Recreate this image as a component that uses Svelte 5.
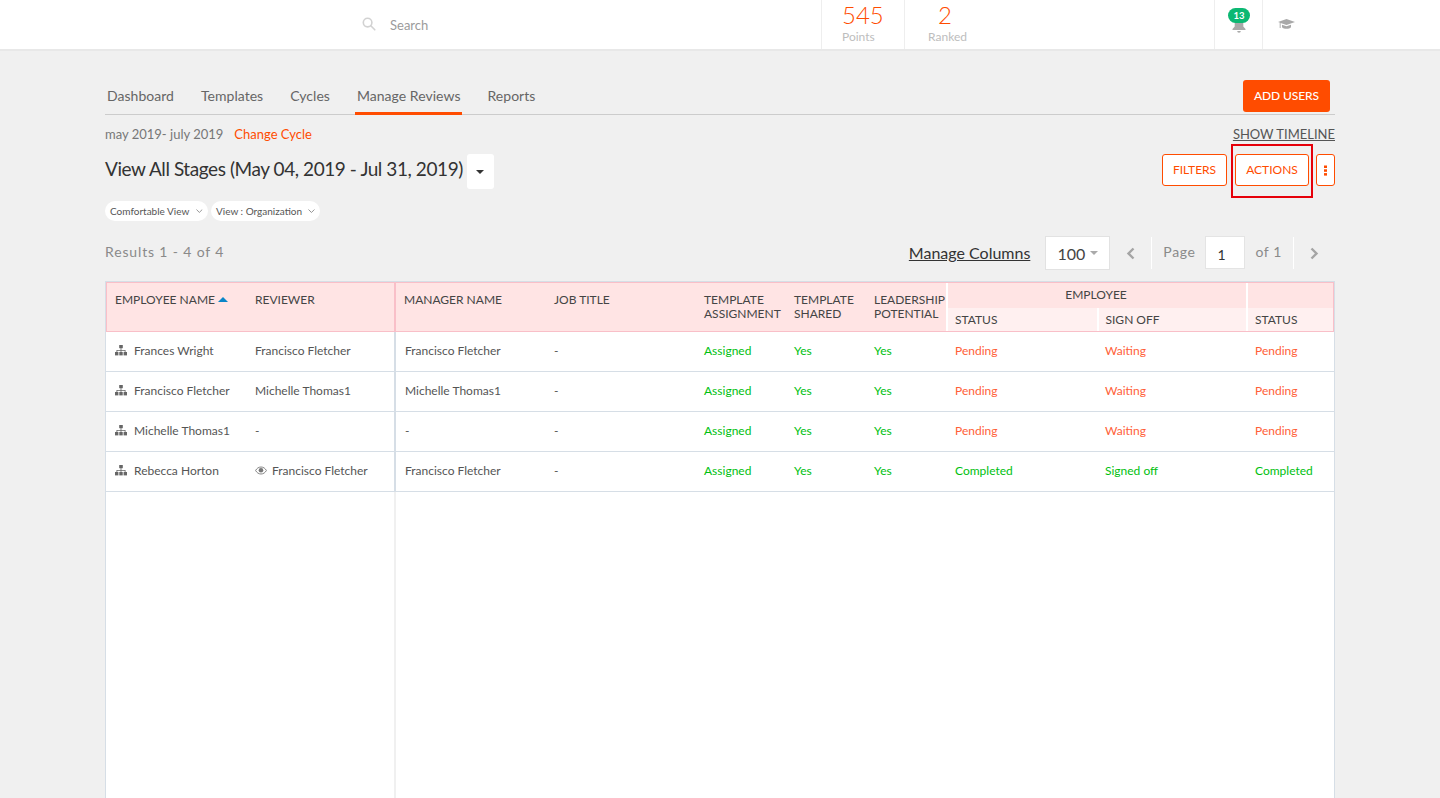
<script>
  const rows = [
    { name: 'Frances Wright', reviewer: 'Francisco Fletcher', eye: false, manager: 'Francisco Fletcher', s1: 'Pending', s2: 'Waiting', s3: 'Pending', done: false },
    { name: 'Francisco Fletcher', reviewer: 'Michelle Thomas1', eye: false, manager: 'Michelle Thomas1', s1: 'Pending', s2: 'Waiting', s3: 'Pending', done: false },
    { name: 'Michelle Thomas1', reviewer: '-', eye: false, manager: '-', s1: 'Pending', s2: 'Waiting', s3: 'Pending', done: false },
    { name: 'Rebecca Horton', reviewer: 'Francisco Fletcher', eye: true, manager: 'Francisco Fletcher', s1: 'Completed', s2: 'Signed off', s3: 'Completed', done: true }
  ];
</script>

<div class="page">
  <header class="topbar">
    <div class="search">
      <svg width="14" height="14" viewBox="0 0 14 14" fill="none" stroke="#d2d2d2" stroke-width="1.6"><circle cx="5.6" cy="5.6" r="4.3"/><path d="M8.8 8.8l4 4" stroke-linecap="round"/></svg>
      <span>Search</span>
    </div>
    <div class="stat first"><b>545</b><small>Points</small></div>
    <div class="stat second"><b>2</b><small>Ranked</small></div>
    <div class="spacer"></div>
    <div class="iconcell bellcell">
      <svg class="bell" width="14" height="15" viewBox="0 0 14 15" fill="#a9a9a9"><path d="M7 0c3 0 4.300 2.200 4.300 5v3.500L13.500 11v1H.5v-1l2.200-2.500V5C2.700 2.200 4 0 7 0z"/><path d="M5.200 13h3.600a1.800 1.800 0 0 1-3.600 0z"/></svg>
      <span class="badge">13</span>
    </div>
    <div class="iconcell hatcell">
      <svg width="17" height="13" viewBox="0 0 17 13" fill="#a9a9a9"><path d="M8.500 1L17 4 8.500 7 2.600 4.900V10H1.700V4.600L0 4z"/><path d="M4 6.700l4.500 1.600L13 6.700v2.600c-1 1-2.700 1.500-4.500 1.500S5 10.300 4 9.300z"/></svg>
    </div>
  </header>

  <main class="content">
    <div class="tabbar">
      <nav class="tabs">
        <span class="tab">Dashboard</span>
        <span class="tab">Templates</span>
        <span class="tab">Cycles</span>
        <span class="tab active">Manage Reviews</span>
        <span class="tab">Reports</span>
      </nav>
      <button class="add">ADD USERS</button>
    </div>

    <div class="cycle-row">
      <span class="cycle">may 2019- july 2019</span>
      <span class="change">Change Cycle</span>
      <span class="timeline">SHOW TIMELINE</span>
    </div>

    <div class="title-row">
      <h1>View All Stages (May 04, 2019 - Jul 31, 2019)</h1>
      <span class="caretbox"><i class="caret"></i></span>
      <div class="actions">
        <button class="outline filters">FILTERS</button>
        <span class="actions-wrap">
          <button class="outline act">ACTIONS</button>
          <span class="mark"></span>
        </span>
        <button class="outline dots" aria-label="More"><svg width="3" height="11" viewBox="0 0 3 11" fill="#ff4c00"><rect x="0" y="0.500" width="3" height="2.500"/><rect x="0" y="4.300" width="3" height="2.500"/><rect x="0" y="8.100" width="3" height="2.500"/></svg></button>
      </div>
    </div>

    <div class="pills">
      <span class="pill">Comfortable View <svg width="7" height="4" viewBox="0 0 7 4" fill="none" stroke="#777" stroke-width=".8"><path d="M.5.500l3 3 3-3"/></svg></span>
      <span class="pill two">View : Organization <svg width="7" height="4" viewBox="0 0 7 4" fill="none" stroke="#777" stroke-width=".8"><path d="M.5.500l3 3 3-3"/></svg></span>
    </div>

    <div class="pager-row">
      <span class="results">Results 1 - 4 of 4</span>
      <span class="manage">Manage Columns</span>
      <span class="size">100 <i class="caret small"></i></span>
      <span class="chev left"><svg width="9" height="13" viewBox="0 0 9 13" fill="none" stroke="#a5a5a5" stroke-width="2.400"><path d="M7.500 1.500l-5 5 5 5"/></svg></span>
      <span class="pg">Page</span>
      <span class="pginput">1</span>
      <span class="pg of">of 1</span>
      <span class="chev right"><svg width="9" height="13" viewBox="0 0 9 13" fill="none" stroke="#a5a5a5" stroke-width="2.400"><path d="M1.500 1.500l5 5-5 5"/></svg></span>
    </div>

    <section class="table">
      <div class="thead">
        <div class="th c1 fixed">EMPLOYEE NAME <i class="sort"></i></div>
        <div class="th c2 fixed">REVIEWER</div>
        <div class="th c3 sep">MANAGER NAME</div>
        <div class="th c4">JOB TITLE</div>
        <div class="th c5">TEMPLATE<br />ASSIGNMENT</div>
        <div class="th c6">TEMPLATE<br />SHARED</div>
        <div class="th c7">LEADERSHIP<br />POTENTIAL</div>
        <div class="group c89">
          <div class="gtitle">EMPLOYEE</div>
          <div class="gsubs"><span class="c8">STATUS</span><span class="c9">SIGN OFF</span></div>
        </div>
        <div class="group c10">
          <div class="gtitle"></div>
          <div class="gsubs"><span>STATUS</span></div>
        </div>
      </div>

      {#each rows as r}
        <div class="tr">
          <div class="td c1 fixed">
            <svg class="org" width="12" height="11" viewBox="0 0 12 11" fill="#666"><rect x="4.200" y="0" width="3.600" height="3.200"/><path d="M5.600 3h.8v2H10.500v2h-.8V5.800H6.400V7h-.8V5.800H2.300V7h-.8V5h4.100z"/><rect x="0" y="7" width="3.400" height="3.400"/><rect x="4.300" y="7" width="3.400" height="3.400"/><rect x="8.600" y="7" width="3.400" height="3.400"/></svg>
            {r.name}
          </div>
          <div class="td c2 fixed">
            {#if r.eye}
              <svg class="eye" width="12" height="9" viewBox="0 0 12 9"><path d="M.6 4.500C1.800 2.300 3.700 1 6 1s4.200 1.300 5.400 3.500C10.200 6.700 8.300 8 6 8S1.800 6.700.6 4.500z" fill="none" stroke="#777" stroke-width=".9"/><circle cx="6" cy="4.300" r="2.300" fill="#777"/></svg>
            {/if}
            {r.reviewer}
          </div>
          <div class="td c3 sep">{r.manager}</div>
          <div class="td c4">-</div>
          <div class="td c5 ok">Assigned</div>
          <div class="td c6 ok">Yes</div>
          <div class="td c7 ok">Yes</div>
          <div class="td c8" class:ok={r.done} class:warn={!r.done}>{r.s1}</div>
          <div class="td c9" class:ok={r.done} class:warn={!r.done}>{r.s2}</div>
          <div class="td c10" class:ok={r.done} class:warn={!r.done}>{r.s3}</div>
        </div>
      {/each}

      <div class="filler"><div class="leftpane"></div></div>
    </section>
  </main>
</div>

<style>
  :global(html), :global(body) { margin: 0; overflow: hidden; background: #f0f0f0; }
  .page { height: 798px; overflow: hidden; background: #f0f0f0; font-family: Lato, "Open Sans", sans-serif; color: #555; box-sizing: border-box; }
  button { font-family: inherit; cursor: pointer; }

  .topbar { display: flex; height: 51px; background: #fff; border-bottom: 2px solid #e8e8e8; box-sizing: border-box; }
  .search { width: 459px; margin-left: 362px; display: flex; align-items: center; gap: 14px; color: #9b9b9b; font-size: 13px; box-sizing: border-box; }
  .search svg { margin-top: -1px; }
  .stat { display: flex; flex-direction: column; border-left: 1px solid #eee; height: 49px; box-sizing: border-box; }
  .stat.first { width: 83px; padding-left: 20px; }
  .stat.second { width: 86px; align-items: center; }
  .stat.second b { margin-left: -5px; }
  .stat b { font-weight: 300; font-size: 24px; line-height: 30px; color: #ff4c00; }
  .stat small { font-size: 12px; line-height: 14px; color: #bdbdbd; }
  .spacer { flex: 1; }
  .iconcell { width: 48px; height: 49px; border-left: 1px solid #eee; position: relative; display: flex; align-items: center; justify-content: center; box-sizing: border-box; }
  .hatcell { margin-right: 130px; }
  .bell { margin-top: 1px; }
  .badge { position: absolute; left: 13px; top: 8px; width: 22px; height: 15px; border-radius: 8px; background: #0cb873; color: #fff; font-size: 9.500px; font-weight: 700; line-height: 15px; text-align: center; }

  .content { width: 1230px; margin-left: 105px; }

  .tabbar { display: flex; justify-content: space-between; height: 64px; box-sizing: border-box; padding-top: 29px; border-bottom: 1px solid #ccc; }
  .tabs { display: flex; align-self: flex-end; gap: 23px; }
  .tab { font-size: 14px; letter-spacing: .03px; line-height: 17px; color: #666; padding: 0 2px 8px; margin-bottom: -1px; border-bottom: 3px solid transparent; }
  .tab.active { border-bottom-color: #ff4c00; }
  .add { width: 87px; height: 32px; margin-right: 5px; background: #ff4c00; color: #fff; font-size: 12px; font-weight: 500; letter-spacing: -.1px; border: 0; border-radius: 3px; padding: 0 0 1px; }

  .cycle-row { display: flex; align-items: center; height: 20px; margin-top: 9px; font-size: 13px; }
  .cycle { color: #777; }
  .change { color: #ff4c00; margin-left: 11px; }
  .timeline { margin-left: auto; color: #555; text-decoration: underline; font-size: 13px; }

  .title-row { display: flex; align-items: flex-start; height: 35px; margin-top: 10px; }
  h1 { margin: 0; font-size: 19px; letter-spacing: -.43px; font-weight: 400; color: #333; line-height: 30px; }
  .caretbox { width: 27px; height: 35px; margin-left: 4px; background: #fff; border-radius: 3px; display: flex; align-items: center; justify-content: center; }
  .caret { display: block; width: 0; height: 0; border-left: 4px solid transparent; border-right: 4px solid transparent; border-top: 4px solid #333; }
  .caret.small { display: inline-block; border-top-color: #aaa; margin: 0 0 0 2px; }
  .actions { margin-left: auto; display: flex; gap: 8px; }
  .outline { height: 32px; background: #fff; color: #ff4c00; border: 1px solid #ff4c00; border-radius: 3px; font-size: 12px; padding: 0 0 2px; display: block; }
  .filters { width: 65px; }
  .act { width: 74px; }
  .dots { width: 19px; margin-left: -1px; padding: 0; display: flex; align-items: center; justify-content: center; }
  .actions-wrap { position: relative; display: block; }
  .mark { position: absolute; left: -4px; right: -4px; top: -10px; bottom: -12px; border: 2px solid #e6000a; box-sizing: border-box; pointer-events: none; }

  .pills { display: flex; gap: 3px; margin-top: 12px; }
  .pill { height: 20px; background: #fff; border-radius: 10px; font-size: 10px; color: #555; display: flex; align-items: center; gap: 7px; padding: 0 5px; box-sizing: border-box; width: 103px; white-space: nowrap; }
  .pill.two { width: 109px; gap: 6px; }

  .pager-row { display: flex; align-items: center; height: 34px; margin-top: 15px; }
  .results { font-size: 14px; color: #8a8a8a; letter-spacing: .85px; margin: -3px auto 0 0; }
  .manage { font-size: 16px; color: #333; text-decoration: underline; margin: -1px 15px 0 0; }
  .size { width: 65px; height: 34px; background: #fff; border: 1px solid #e2e2e2; font-size: 16px; color: #444; display: flex; align-items: center; justify-content: center; box-sizing: border-box; gap: 3px; }
  .chev { width: 42px; height: 32px; display: flex; align-items: center; justify-content: center; box-sizing: border-box; }
  .chev.left { border-right: 1px solid #fff; }
  .chev.right { border-left: 1px solid #fff; margin-left: 11px; }
  .pg { font-size: 14px; color: #8a8a8a; letter-spacing: .6px; margin-top: -3px; }
  .pg:not(.of) { margin-left: 11px; }
  .pginput { align-self: flex-start; width: 40px; height: 33px; background: #fff; border: 1px solid #e4e4e4; box-sizing: border-box; margin: 0 10px; font-size: 14px; color: #333; padding-left: 11px; line-height: 35px; }

  .table { margin-top: 11px; background: #fff; border: 1px solid #d6dee6; border-bottom: 0; min-height: 560px; box-sizing: border-box; font-size: 12px; color: #555; }
  .thead { display: grid; grid-template-columns: 140px 147px 151px 150px 90px 80px 81px 300px 1fr; height: 50px; background: #ffe4e4; border: 1px solid #f9bfc8; box-sizing: border-box; color: #444; }
  .th { padding: 10px 0 0 9px; line-height: 14px; box-sizing: border-box; font-size: 12px; white-space: nowrap; }
  .th.fixed { padding-left: 8px; }
  .th.sep { border-left: 2px solid #f9bfc8; padding-left: 8px; }
  .sort { display: inline-block; width: 0; height: 0; border-left: 5px solid transparent; border-right: 5px solid transparent; border-bottom: 5px solid #0a86c8; margin: 0 0 2px 0; }
  .group { display: flex; flex-direction: column; border-left: 2px solid #fff; }
  .gtitle { height: 25px; line-height: 23px; text-align: center; padding-right: 2px; }
  .gsubs { flex: 1; display: flex; background: #fff0f0; line-height: 23px; padding-left: 7px; }
  .c89 .gsubs span { width: 150px; box-sizing: border-box; }
  .c89 .gsubs .c8 { width: 142px; }
  .c89 .gsubs .c9 { border-left: 2px solid #fff; padding-left: 7px; }

  .tr { display: grid; grid-template-columns: 140px 148px 151px 150px 90px 80px 81px 150px 150px 1fr; height: 40px; border-bottom: 1px solid #d6dee6; box-sizing: border-box; }
  .td { display: flex; align-items: center; padding: 0 0 2px 9px; color: #555; box-sizing: border-box; white-space: nowrap; }
  .td.sep { border-left: 2px solid #d6dee6; padding-left: 9px; }
  .tr .c1 { gap: 7px; }
  .tr .c2 { gap: 5px; }
  .td.ok { color: #00bf0f; }
  .td.warn { color: #ff6038; }

  .filler { height: 320px; }
  .leftpane { width: 290px; height: 100%; border-right: 2px solid #f0f0f0; box-sizing: border-box; }
</style>
